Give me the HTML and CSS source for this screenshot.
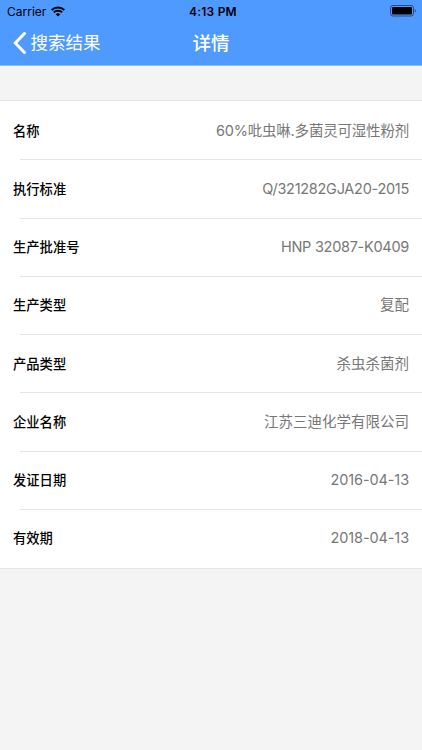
FILE: index.html
```
<!DOCTYPE html>
<html lang="zh-CN">

<head>
    <meta charset="UTF-8">
    <meta name="viewport" content="width=device-width, initial-scale=1.0">
    <title>详情</title>
    <link rel="stylesheet" href="styles.css">
</head>

<body>
    <header class="header">
        <div class="status-bar">
            <div class="carrier">
                <span>Carrier</span>
                <svg class="wifi" width="14" height="11" viewBox="0 0 14 11">
                    <path d="M0.7 4a9 9 0 0 1 12.6 0" fill="none" stroke="#000" stroke-width="2.1" />
                    <path d="M2.8 6.4a6 6 0 0 1 8.4 0" fill="none" stroke="#000" stroke-width="1.9" />
                    <path d="M4.7 8.3a3.3 3.3 0 0 1 4.6 0L7 10.6z" fill="#000" />
                </svg>
            </div>
            <span class="time">4:13 PM</span>
            <svg class="battery" width="27" height="12" viewBox="0 0 27 12">
                <rect x="0.5" y="0.5" width="23" height="10.5" rx="2.5" fill="none" stroke="#000" stroke-opacity="0.5" />
                <rect x="2" y="2" width="20" height="7.5" rx="1" fill="#000" />
                <path d="M24.8 4a2 2 0 0 1 0 3.6z" fill="#000" fill-opacity="0.5" />
            </svg>
        </div>
        <nav class="nav-bar">
            <a class="back" href="#">
                <svg width="14" height="23" viewBox="0 0 14 23">
                    <path d="M11.5 2.5L2.3 12L11.5 21.5" fill="none" stroke="#fff" stroke-width="3" stroke-linecap="round" />
                </svg>
                <span>搜索结果</span>
            </a>
            <h1>详情</h1>
        </nav>
    </header>

    <ul class="detail-list">
        <li><label>名称</label><span class="name">60%吡虫啉.多菌灵可湿性粉剂</span></li>
        <li><label>执行标准</label><span class="code">Q/321282GJA20-2015</span></li>
        <li><label>生产批准号</label><span class="code">HNP 32087-K0409</span></li>
        <li><label>生产类型</label><span>复配</span></li>
        <li><label>产品类型</label><span>杀虫杀菌剂</span></li>
        <li><label>企业名称</label><span>江苏三迪化学有限公司</span></li>
        <li><label>发证日期</label><span class="date">2016-04-13</span></li>
        <li><label>有效期</label><span class="date">2018-04-13</span></li>
    </ul>
</body>

</html>
```

FILE: styles.css
```
body {
    margin: 0;
    background: #f4f4f4;
    font-family: Inter, "Noto Sans CJK SC", sans-serif;
}

.header {
    height: 65px;
    background: #4f9afe;
    border-bottom: 1px solid #8dbbf8;
}

.status-bar {
    display: grid;
    grid-template-columns: 1fr auto 1fr;
    align-items: center;
    height: 22px;
    padding: 0 5px 0 7px;
    font-size: 12px;
    color: #000;
}

.carrier {
    display: flex;
    align-items: center;
    gap: 5px;
}

.time {
    padding-left: 2px;
    font-weight: 600;
    letter-spacing: 0.2px;
}

.battery {
    justify-self: end;
}

.nav-bar {
    display: grid;
    grid-template-columns: 1fr auto 1fr;
    align-items: center;
    height: 41px;
    padding: 0 13px;
    color: #fff;
}

.back {
    display: flex;
    align-items: center;
    gap: 3.5px;
    color: #fff;
    font-size: 17.5px;
    text-decoration: none;
}

.back span {
    line-height: 22px;
}

h1 {
    margin: 0;
    font-size: 18.5px;
    font-weight: 500;
    line-height: 22px;
}

.detail-list {
    margin: 34px 0 0;
    padding: 1px 0 0;
    list-style: none;
    background: #fff;
    border-top: 1px solid #e4e4e4;
    border-bottom: 1px solid #e4e4e4;
}

.detail-list li {
    display: flex;
    justify-content: space-between;
    align-items: center;
    box-sizing: border-box;
    height: 58.25px;
    padding: 0 13px 1px;
    background: linear-gradient(#e4e4e4, #e4e4e4) 20px 100% / 100% 1px no-repeat;
}

.detail-list li:last-child {
    background: none;
}

.detail-list label {
    font-size: 13.3px;
    font-weight: 500;
    line-height: 20px;
    color: #000;
}

.detail-list span {
    font-size: 14.5px;
    line-height: 20px;
    color: #777;
}

.detail-list .name {
    letter-spacing: -0.2px;
}

.detail-list .code {
    letter-spacing: -0.28px;
}

.detail-list .date {
    letter-spacing: -0.1px;
}
```
